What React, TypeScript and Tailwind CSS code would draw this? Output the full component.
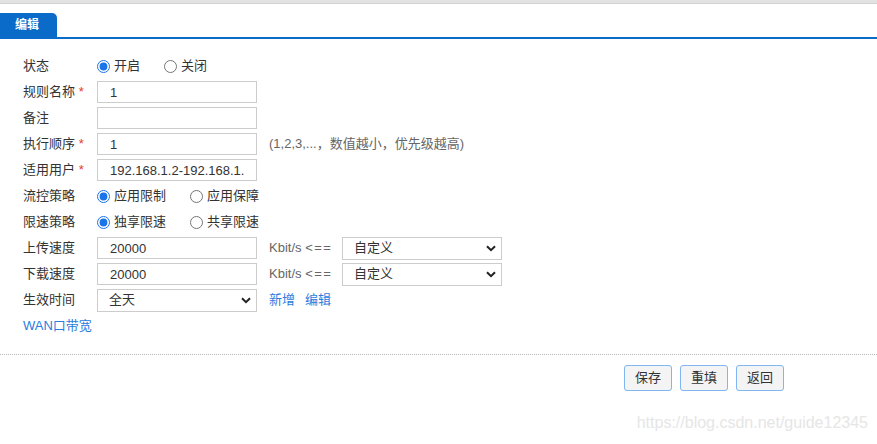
import { ReactNode } from 'react';

const font = { fontFamily: '"Liberation Sans", "Noto Sans CJK SC", sans-serif' };

function Row({ label, required, children }: { label: string; required?: boolean; children?: ReactNode }) {
  return (
    <div className="flex h-[26px] items-center">
      <div className="w-[74px] shrink-0 text-[#333]">
        {label}
        {required && <span className="text-[#e4393c]"> *</span>}
      </div>
      {children}
    </div>
  );
}

function TextInput({ value }: { value: string }) {
  return (
    <input
      readOnly
      value={value}
      className="h-[22px] w-[160px] border border-[#ccc] bg-white px-[12px] text-[13px] text-[#333] outline-none"
    />
  );
}

function Select({ value, width }: { value: string; width: string }) {
  return (
    <div className={`relative h-[23px] ${width}`}>
      <select
        defaultValue={value}
        className="h-full w-full appearance-none border border-[#ccc] bg-white pl-[11px] text-[13px] text-[#333] outline-none"
      >
        <option>{value}</option>
      </select>
      {/* chevron */}
      <svg
        className="pointer-events-none absolute right-[6px] top-[8px]"
        width="10"
        height="7"
        viewBox="0 0 10 7"
      >
        <path d="M1 1.2 L5 5.2 L9 1.2" fill="none" stroke="#222" strokeWidth="2" />
      </svg>
    </div>
  );
}

function Radio({ label, checked, name }: { label: string; checked?: boolean; name: string }) {
  return (
    <label className="mr-[24px] flex items-center text-[#333]">
      <input
        type="radio"
        name={name}
        defaultChecked={checked}
        className="m-0 mr-[4px] h-[13px] w-[13px] accent-[#1a73e8]"
      />
      {label}
    </label>
  );
}

function Unit() {
  return (
    <span className="ml-[12px] w-[73px] text-[#666]">
      Kbit/s <span className="tracking-[1.5px]">&lt;==</span>
    </span>
  );
}

export default function App() {
  return (
    <div className="relative h-[444px] w-full overflow-hidden bg-white text-[13px]" style={font}>
      {/* top strip */}
      <div className="h-[4px] border-b border-[#d2d2d2] bg-[#e3e3e3]" />

      {/* tab bar */}
      <div className="mt-[9px] border-b-2 border-[#0b6bc9]">
        <div className="flex h-[24px] w-[57px] items-center rounded-tr-[5px] bg-[#0b6bc9] pl-[15px] text-[12px] font-bold text-white">
          编辑
        </div>
      </div>

      {/* form */}
      <div className="pl-[23px] pt-[14px]">
        <Row label="状态">
          <Radio name="status" label="开启" checked />
          <Radio name="status" label="关闭" />
        </Row>
        <Row label="规则名称" required>
          <TextInput value="1" />
        </Row>
        <Row label="备注">
          <TextInput value="" />
        </Row>
        <Row label="执行顺序" required>
          <TextInput value="1" />
          <span className="ml-[12px] text-[#666]">(1,2,3,...，数值越小，优先级越高)</span>
        </Row>
        <Row label="适用用户" required>
          <TextInput value="192.168.1.2-192.168.1.254" />
        </Row>
        <Row label="流控策略">
          <Radio name="flow" label="应用限制" checked />
          <Radio name="flow" label="应用保障" />
        </Row>
        <Row label="限速策略">
          <Radio name="limit" label="独享限速" checked />
          <Radio name="limit" label="共享限速" />
        </Row>
        <Row label="上传速度">
          <TextInput value="20000" />
          <Unit />
          <Select value="自定义" width="w-[160px]" />
        </Row>
        <Row label="下载速度">
          <TextInput value="20000" />
          <Unit />
          <Select value="自定义" width="w-[160px]" />
        </Row>
        <Row label="生效时间">
          <Select value="全天" width="w-[160px]" />
          <a className="ml-[12px] cursor-pointer text-[#2b7ce0]">新增</a>
          <a className="ml-[10px] cursor-pointer text-[#2b7ce0]">编辑</a>
        </Row>
        <div className="flex h-[26px] items-center">
          <a className="cursor-pointer text-[#2b7ce0]">WAN口带宽</a>
        </div>
      </div>

      {/* divider */}
      <div className="mt-[15px] border-t border-dotted border-[#bbb]" />

      {/* actions */}
      <div className="mt-[10px] flex justify-end gap-[8px] pr-[93px]">
        {['保存', '重填', '返回'].map((t) => (
          <button
            key={t}
            className="h-[26px] w-[48px] rounded-[3px] border border-[#7fb6f0] bg-[#f4f4f4] text-[13px] text-[#333]"
          >
            {t}
          </button>
        ))}
      </div>

      {/* watermark */}
      <div className="pointer-events-none absolute bottom-[9px] right-[9px] text-[16px] text-[#e6e6e6]">
        https://blog.csdn.net/guide12345
      </div>
    </div>
  );
}
